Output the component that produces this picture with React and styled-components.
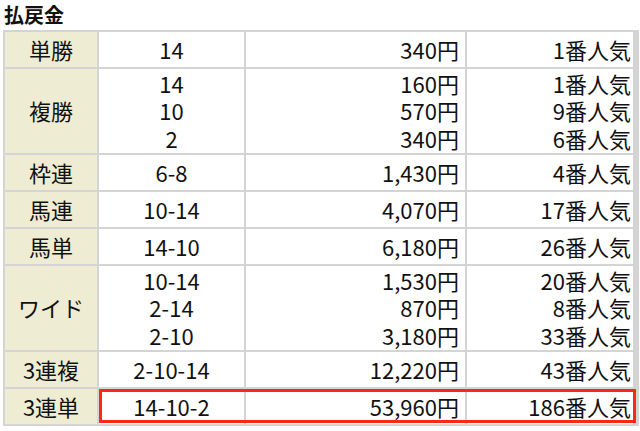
import React from 'react';
import styled, { createGlobalStyle } from 'styled-components';

const GlobalStyle = createGlobalStyle`
  body {
    margin: 0;
    background: #fff;
    font-family: "Noto Sans CJK JP", "Noto Sans", sans-serif;
    color: #111;
  }
`;

const Root = styled.div`
  width: 640px;
  padding-left: 3px;
  box-sizing: border-box;
`;

const Title = styled.h2`
  margin: 0;
  height: 30px;
  line-height: 29px;
  font-size: 20px;
  font-weight: 700;
  padding-left: 1px;
`;

const Table = styled.div`
  display: flex;
  flex-direction: column;
  gap: 2px;
  width: 632px;
  padding: 2px;
  background: #d4d4d4;
`;

const Row = styled.div`
  position: relative;
  display: grid;
  grid-template-columns: 92px 145px 219px 166px;
  gap: 2px;
  height: ${(p) => (p.$lines > 1 ? 84 : 35)}px;
`;

const Cell = styled.div`
  display: flex;
  flex-direction: column;
  justify-content: center;
  align-items: ${(p) => (p.$align === 'right' ? 'flex-end' : 'center')};
  padding-right: ${(p) => p.$pr || 0}px;
  background: ${(p) => (p.$head ? '#eeecd3' : '#fff')};
  font-size: 22px;
  line-height: 27.5px;
  white-space: nowrap;
`;

const Line = styled.span`
  display: block;
`;

const Highlight = styled.div`
  position: absolute;
  top: 0;
  bottom: 1px;
  left: 94px;
  right: 1px;
  border: 3px solid #f82a14;
  pointer-events: none;
`;

const rows = [
  { label: '単勝', nums: ['14'], pays: ['340円'], pops: ['1番人気'] },
  { label: '複勝', nums: ['14', '10', '2'], pays: ['160円', '570円', '340円'], pops: ['1番人気', '9番人気', '6番人気'] },
  { label: '枠連', nums: ['6-8'], pays: ['1,430円'], pops: ['4番人気'] },
  { label: '馬連', nums: ['10-14'], pays: ['4,070円'], pops: ['17番人気'] },
  { label: '馬単', nums: ['14-10'], pays: ['6,180円'], pops: ['26番人気'] },
  { label: 'ワイド', nums: ['10-14', '2-14', '2-10'], pays: ['1,530円', '870円', '3,180円'], pops: ['20番人気', '8番人気', '33番人気'] },
  { label: '3連複', nums: ['2-10-14'], pays: ['12,220円'], pops: ['43番人気'] },
  { label: '3連単', nums: ['14-10-2'], pays: ['53,960円'], pops: ['186番人気'], marked: true },
];

const Lines = ({ items }) => items.map((t, i) => <Line key={i}>{t}</Line>);

const App = () => (
  <Root>
    <GlobalStyle />
    <Title>払戻金</Title>
    <Table>
      {rows.map((r) => (
        <Row key={r.label} $lines={r.nums.length}>
          <Cell $head>{r.label}</Cell>
          <Cell><Lines items={r.nums} /></Cell>
          <Cell $align="right" $pr={6}><Lines items={r.pays} /></Cell>
          <Cell $align="right" $pr={2}><Lines items={r.pops} /></Cell>
          {r.marked && <Highlight />}
        </Row>
      ))}
    </Table>
  </Root>
);

export default App;
